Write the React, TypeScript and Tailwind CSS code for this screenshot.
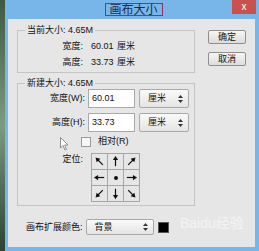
import React from 'react';

const Arrow = ({ angle }: { angle: number }) => (
  <svg width="15" height="15" viewBox="0 0 16 16">
    <g transform={`rotate(${angle} 8 8)`}>
      <line x1="8" y1="13" x2="8" y2="5" stroke="#111" strokeWidth="1.3" />
      <polygon points="8,2 5.2,6.5 10.8,6.5" fill="#111" />
    </g>
  </svg>
);

const UpDown = () => (
  <svg width="5" height="8" viewBox="0 0 5 8">
    <polygon points="2.5,0 5,3 0,3" fill="#333" />
    <polygon points="2.5,8 5,5 0,5" fill="#333" />
  </svg>
);

const Select = ({ value, w }: { value: string; w: string }) => (
  <div
    className={`${w} flex h-full items-center justify-between rounded-[2px] border border-[#a9a9a9] bg-gradient-to-b from-[#fafafa] to-[#e4e4e4] pl-[8px] pr-[5px]`}
  >
    <span>{value}</span>
    <UpDown />
  </div>
);

const Button = ({ label }: { label: string }) => (
  <div className="flex h-[14px] w-[38px] items-center justify-center rounded-[2px] border border-[#8f8f8f] bg-gradient-to-b from-[#f6f6f6] to-[#dcdcdc]">
    {label}
  </div>
);

export default function App() {
  const cells = [315, 0, 45, 270, -1, 90, 225, 180, 135];

  return (
    <div className="flex h-[251px] w-[259px] overflow-hidden bg-[#78b6ea] font-['Liberation_Sans','Noto_Sans_CJK_SC',sans-serif] text-[9px] leading-none text-[#111]">
      <div className="h-full w-[5px] bg-gradient-to-b from-[#3f5a44] via-[#7d9a82] to-[#2c4532]" />
      <div className="flex flex-1 flex-col pb-[4px] pl-[3px] pr-[4px]">
        <div className="relative flex h-[19px] justify-center pt-[3px]">
          <div className="ml-[4px] flex h-[13px] w-[58px] items-center justify-center border border-[#9c2f62] text-[12px] text-[#1c2a4a]">
            画布大小
          </div>
          <div className="absolute right-[-1px] top-0 flex h-[14px] w-[24px] items-center justify-center bg-[#c9524c] text-[10px] text-white">
            x
          </div>
        </div>

        <div className="relative flex flex-1 bg-[#e6e6e6] pl-[9px] pt-[5px]">
          <div className="flex w-[178px] flex-col">
            <fieldset className="border border-[#c4c4c4] pb-[2px]">
              <legend className="ml-[7px] px-[2px] leading-[12px]">当前大小: 4.65M</legend>
              <div className="mt-[2px] flex h-[16px] items-center">
                <span className="w-[65px] text-right">宽度:</span>
                <span className="ml-[8px] w-[26px]">60.01</span>
                <span>厘米</span>
              </div>
              <div className="flex h-[16px] items-center">
                <span className="w-[65px] text-right">高度:</span>
                <span className="ml-[8px] w-[26px]">33.73</span>
                <span>厘米</span>
              </div>
            </fieldset>

            <fieldset className="mt-[4px] border border-[#c4c4c4] pb-[3px]">
              <legend className="ml-[7px] px-[2px] leading-[12px]">新建大小: 4.65M</legend>
              <div className="flex h-[19px] items-center">
                <span className="w-[67px] text-right">宽度(W):</span>
                <div className="ml-[3px] flex h-full w-[47px] items-center border border-[#a9a9a9] bg-white pl-[3px]">
                  60.01
                </div>
                <div className="ml-[4px] h-full">
                  <Select value="厘米" w="w-[50px]" />
                </div>
              </div>
              <div className="mt-[5px] flex h-[19px] items-center">
                <span className="w-[67px] text-right">高度(H):</span>
                <div className="ml-[3px] flex h-full w-[47px] items-center border border-[#a9a9a9] bg-white pl-[3px]">
                  33.73
                </div>
                <div className="ml-[4px] h-full">
                  <Select value="厘米" w="w-[50px]" />
                </div>
              </div>
              <div className="mt-[4px] flex h-[11px] items-center pl-[63px]">
                <div className="h-[10px] w-[10px] border border-[#9a9a9a] bg-[#f7f7f7]" />
                <span className="ml-[7px]">相对(R)</span>
              </div>
              <div className="mt-[6px] flex">
                <span className="mt-[2px] w-[65px] text-right">定位:</span>
                <div className="ml-[8px] grid grid-cols-3 gap-px bg-[#a6a6a6] p-px">
                  {cells.map((a, i) => (
                    <div key={i} className="flex h-[15px] w-[15px] items-center justify-center bg-[#e6e6e6]">
                      {a < 0 ? <div className="h-[4px] w-[4px] rounded-full bg-[#111]" /> : <Arrow angle={a} />}
                    </div>
                  ))}
                </div>
              </div>
            </fieldset>

            <div className="mt-[13px] flex h-[16px] items-center pl-[9px]">
              <span>画布扩展颜色:</span>
              <div className="ml-[3px] h-full">
                <Select value="背景" w="w-[68px]" />
              </div>
              <div className="ml-[4px] h-[11px] w-[11px] border border-[#555] bg-black" />
            </div>
          </div>

          <div className="ml-[13px] mt-[6px] flex flex-col gap-[8px]">
            <Button label="确定" />
            <Button label="取消" />
          </div>

          <svg className="absolute left-[52px] top-[118px]" width="9" height="14" viewBox="0 0 9 14">
            <polygon points="0.5,0.5 0.5,11 3,8.5 5,13 6.5,12.3 4.6,8 8,8" fill="#fff" stroke="#777" strokeWidth="0.8" />
          </svg>

          <div className="absolute left-[172px] top-[197px] text-[14px] text-white/60">Baidu经验</div>
        </div>
      </div>
    </div>
  );
}
